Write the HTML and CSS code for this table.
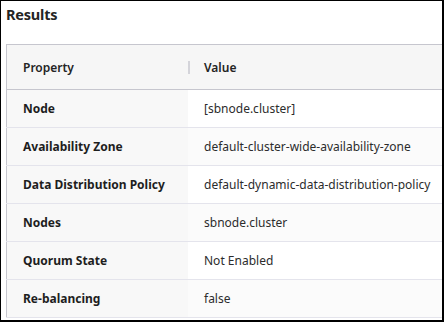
FILE: index.html
```html
<!DOCTYPE html>
<html>
<head>
<meta charset="utf-8">
<link rel="stylesheet" href="styles.css">
</head>
<body>
<div class="frame">
  <h1 class="title">Results</h1>
  <table class="grid">
    <thead>
      <tr>
        <th class="col-prop"><span class="hcell">Property</span></th>
        <th class="col-val"><span class="hcell sep">Value</span></th>
      </tr>
    </thead>
    <tbody>
      <tr><td class="prop">Node</td><td class="val">[sbnode.cluster]</td></tr>
      <tr class="alt"><td class="prop">Availability Zone</td><td class="val">default-cluster-wide-availability-zone</td></tr>
      <tr><td class="prop">Data Distribution Policy</td><td class="val">default-dynamic-data-distribution-policy</td></tr>
      <tr class="alt"><td class="prop">Nodes</td><td class="val">sbnode.cluster</td></tr>
      <tr><td class="prop">Quorum State</td><td class="val">Not Enabled</td></tr>
      <tr class="alt"><td class="prop">Re-balancing</td><td class="val">false</td></tr>
    </tbody>
  </table>
</div>
</body>
</html>
```
FILE: styles.css
```css
html, body {
  margin: 0;
  padding: 0;
  background: #ffffff;
}
.frame {
  box-sizing: border-box;
  width: 444px;
  height: 322px;
  border-top: 1px solid #000;
  border-left: 1px solid #000;
  border-right: 2px solid #000;
  border-bottom: 2px solid #000;
  padding-left: 5px;
  overflow: hidden;
  font-family: "Noto Sans", "Open Sans", sans-serif;
  color: #242424;
}
.title {
  margin: 0;
  height: 43px;
  padding-top: 3px;
  box-sizing: border-box;
  font-size: 14.5px;
  font-weight: 700;
  line-height: 20px;
  letter-spacing: -0.2px;
  color: #242424;
}
.grid {
  border-collapse: collapse;
  width: 437px;
  table-layout: fixed;
  font-size: 12px;
}
.grid th {
  height: 44px;
  padding: 0;
  background: #f6f6f6;
  border-top: 1px solid #c6c6ce;
  border-bottom: 1px solid #c6c6ce;
  text-align: left;
  font-weight: 600;
  color: #242424;
}
.grid th.col-prop {
  width: 181px;
  border-left: 1px solid #c6c6ce;
}
.hcell {
  display: flex;
  align-items: center;
  height: 44px;
  padding-left: 16px;
}
.hcell.sep {
  position: relative;
}
.hcell.sep::before {
  content: "";
  position: absolute;
  left: 0;
  top: 16px;
  width: 2px;
  height: 13px;
  background: #d4d4da;
}
.grid td {
  height: 37px;
  padding: 0 0 0 16px;
  border-bottom: 1px solid #e4e4ec;
  white-space: nowrap;
}
.grid td.prop {
  border-left: 1px solid #c6c6ce;
  background: #f8f8f8;
  font-weight: 700;
  color: #1e1e1e;
}
.grid td.val {
  background: #ffffff;
  color: #2c2c2c;
}
.grid tr.alt td.val {
  background: #fbfbfb;
}
```
